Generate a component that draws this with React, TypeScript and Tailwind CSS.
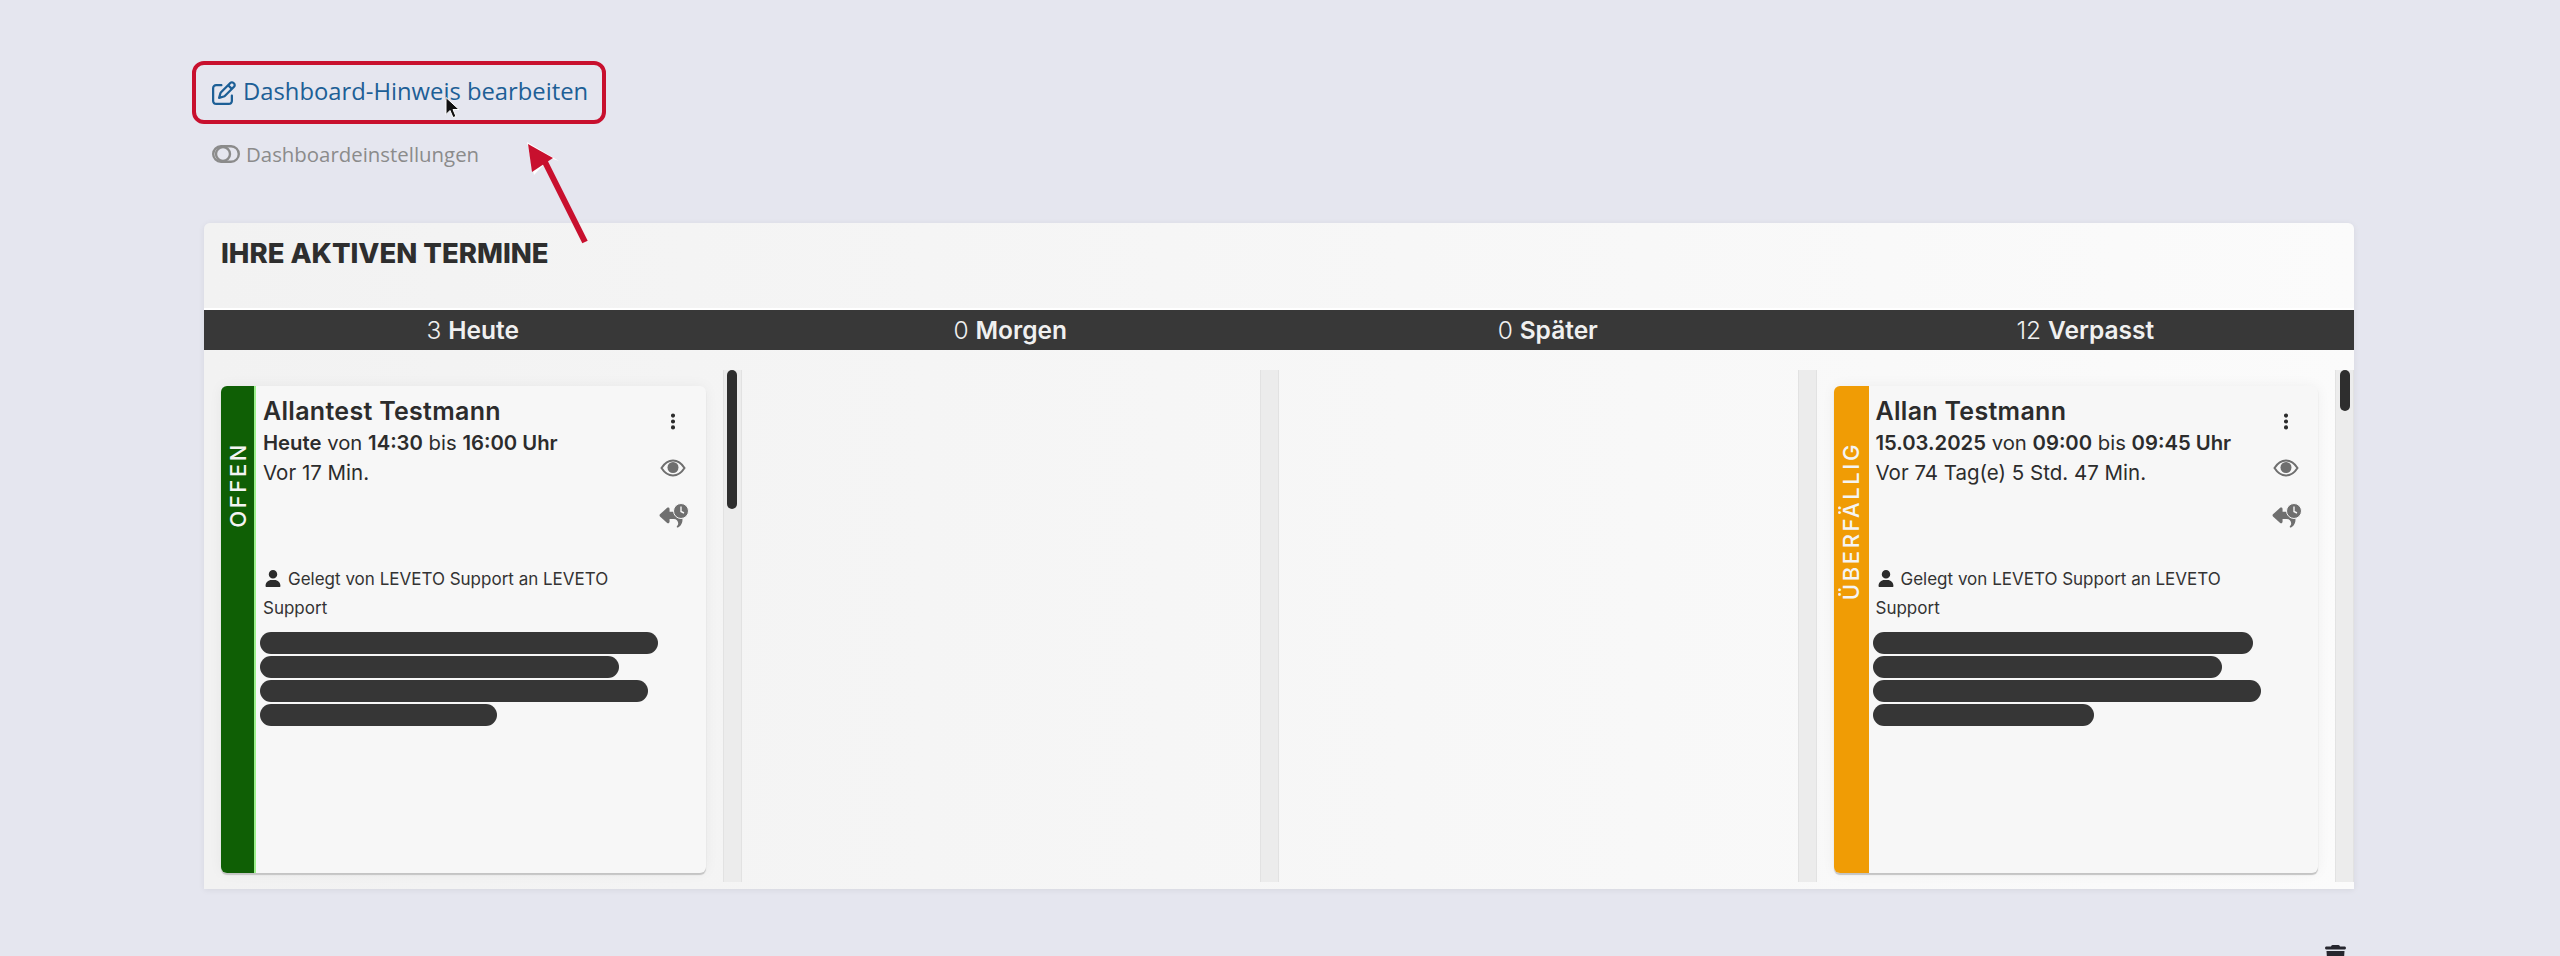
import React from 'react';
import { FaRegPenToSquare, FaReply, FaUser, FaEllipsisVertical, FaTrash } from 'react-icons/fa6';

interface CardProps {
    name: string;
    first: string;
    from: string;
    to: string;
    ago: string;
    label: string;
    strip: string;
    bars: number[];
}

const EyeIcon = () => (
    <svg viewBox="0 0 26 18" className="w-[26px] h-[18px] text-[#6f6f6f]">
        <path d="M1.5 9C5 3.5 9 1.5 13 1.5S21 3.5 24.5 9C21 14.5 17 16.5 13 16.5S5 14.5 1.5 9Z" fill="none" stroke="currentColor" strokeWidth="2" />
        <circle cx="13" cy="8.5" r="5.5" fill="currentColor" />
    </svg>
);

const ReplyClock = () => (
    <div className="relative w-[32px] h-[26px] text-[#6f6f6f]">
        <FaReply className="absolute left-0 top-[3px] w-[28px] h-[23px]" />
        <svg viewBox="0 0 16 16" className="absolute right-0 top-0 w-[16px] h-[16px]">
            <circle cx="8" cy="8" r="7.5" fill="#6f6f6f" stroke="#f7f7f7" strokeWidth="1" />
            <path d="M8 3.5V8.5L11 10" fill="none" stroke="#f7f7f7" strokeWidth="1.4" />
        </svg>
    </div>
);

const Card = ({ name, first, from, to, ago, label, strip, bars }: CardProps) => (
    <div className="flex h-[487px] rounded-[6px] overflow-hidden bg-[#f7f7f7] shadow-[0_2px_1px_#c4c4c4,0_0_14px_rgba(0,0,0,0.05)]">
        <div className={`w-[35px] shrink-0 flex justify-center pt-[56px] ${strip}`}>
            <span className="[writing-mode:vertical-rl] rotate-180 text-[22px] leading-none tracking-[2.6px] text-[#f4f4f4] font-medium h-fit">
                {label}
            </span>
        </div>
        <div className="flex-1 min-w-0 pl-[4px]">
            <div className="flex h-[172px]">
                <div className="flex-1 pl-[3px] pt-[9px] text-[#2c2c2c] whitespace-nowrap">
                    <div className="text-[25px] leading-[32px] font-semibold tracking-[0.3px]">{name}</div>
                    <div className="text-[20.3px] leading-[30px] mt-[1px]">
                        <b className="font-semibold">{first}</b> von <b className="font-semibold">{from}</b> bis{' '}
                        <b className="font-semibold">{to}</b>
                    </div>
                    <div className="text-[20.5px] leading-[30px]">{ago}</div>
                </div>
                <div className="w-[64px] shrink-0 flex flex-col items-center pt-[26px] pr-[1px]">
                    <FaEllipsisVertical className="w-[18px] h-[19px] text-[#2c2c2c]" />
                    <div className="mt-[28px]">
                        <EyeIcon />
                    </div>
                    <div className="mt-[26px]">
                        <ReplyClock />
                    </div>
                </div>
            </div>
            <div className="pl-[3px] pt-[7px] pr-[70px] text-[17px] leading-[29px] text-[#333]">
                <FaUser className="inline-block w-[16px] h-[17px] mx-[2px] mr-[7px] align-[-2px] text-[#2c2c2c]" />
                Gelegt von LEVETO Support an LEVETO Support
            </div>
            <div className="flex flex-col gap-[2px] mt-[9px]">
                {bars.map((w, i) => (
                    <div key={i} className="h-[22px] rounded-[11px] bg-[#363636]" style={{ width: w }} />
                ))}
            </div>
        </div>
    </div>
);

const Column = ({ thumb, children }: { thumb?: number; children?: React.ReactNode }) => (
    <div className="flex h-[512px]">
        <div className="flex-1 min-w-0 pl-[17px] pr-[17px] pt-[16px]">{children}</div>
        <div className="w-[19px] shrink-0 bg-[#ececec] border-x border-[#e2e2e2] flex justify-center">
            {thumb && <div className="w-[10px] rounded-[5px] bg-[#2e2e2e]" style={{ height: thumb }} />}
        </div>
    </div>
);

const heads = [
    ['3', 'Heute'],
    ['0', 'Morgen'],
    ['0', 'Später'],
    ['12', 'Verpasst'],
];

export default function App() {
    return (
        <div className="relative w-[2560px] h-[956px] overflow-hidden bg-[#e5e6ef] font-['Inter',sans-serif] pt-[61px] pl-[192px]">
            <div className="w-[414px] h-[63px] rounded-[12px] border-[4px] border-[#c8102e] flex items-center pl-[16px] text-[#1d5f96] font-['Open_Sans',sans-serif]">
                <FaRegPenToSquare className="w-[24px] h-[24px] mr-[7px] shrink-0" />
                <span className="text-[23.8px] leading-none whitespace-nowrap -translate-y-px">Dashboard-Hinweis bearbeiten</span>
            </div>
            <div className="flex items-center h-[24px] mt-[18px] pl-[20px] text-[#8b8b8b] font-['Open_Sans',sans-serif]">
                <svg viewBox="0 0 28 18" className="w-[28px] h-[18px] mr-[6px]">
                    <rect x="1.2" y="1.2" width="25.6" height="15.6" rx="7.8" fill="none" stroke="currentColor" strokeWidth="2.4" />
                    <circle cx="11" cy="9" r="7" fill="none" stroke="currentColor" strokeWidth="2.4" />
                </svg>
                <span className="text-[20.4px] leading-none whitespace-nowrap">Dashboardeinstellungen</span>
            </div>

            <div className="w-[2150px] h-[666px] ml-[12px] mt-[57px] rounded-t-[6px] bg-gradient-to-r from-[#f2f2f2] to-[#fbfbfb] shadow-[0_1px_6px_rgba(0,0,0,0.07)]">
                <div className="h-[87px] pl-[17px] pt-[13px] border-b-2 border-white">
                    <h1 className="text-[27.5px] leading-[34px] font-extrabold text-[#2e2e2e] whitespace-nowrap">IHRE AKTIVEN TERMINE</h1>
                </div>
                <div className="grid grid-cols-4 h-[40px] bg-[#383838] text-[24.5px] leading-[40px] text-center text-[#f0f0f0]">
                    {heads.map(([n, t]) => (
                        <div key={t}>
                            <span className="font-light">{n}</span> <b className="font-semibold">{t}</b>
                        </div>
                    ))}
                </div>
                <div className="grid grid-cols-4 pt-[20px]">
                    <Column thumb={139}>
                        <Card
                            name="Allantest Testmann"
                            first="Heute"
                            from="14:30"
                            to="16:00 Uhr"
                            ago="Vor 17 Min."
                            label="OFFEN"
                            strip="bg-[#0f5f05] border-r-2 border-[#9cf08c]"
                            bars={[398, 359, 388, 237]}
                        />
                    </Column>
                    <Column />
                    <Column />
                    <Column thumb={41}>
                        <Card
                            name="Allan Testmann"
                            first="15.03.2025"
                            from="09:00"
                            to="09:45 Uhr"
                            ago="Vor 74 Tag(e) 5 Std. 47 Min."
                            label="ÜBERFÄLLIG"
                            strip="bg-[#f09c05]"
                            bars={[380, 349, 388, 221]}
                        />
                    </Column>
                </div>
            </div>

            <div className="mt-[56px] pl-[2133px]">
                <FaTrash className="w-[21px] h-[24px] text-[#26262e]" />
            </div>

            {/* annotation arrow and mouse pointer */}
            <svg viewBox="0 0 100 130" className="absolute left-[510px] top-[130px] w-[100px] h-[130px]">
                <path d="M17 12L49 31L40 28L24 45Z" fill="#fff" />
                <path d="M75 112L34 30" stroke="#c8102e" strokeWidth="6" />
                <path d="M18 14L43 28L22 42Z" fill="#c8102e" />
            </svg>
            <svg viewBox="0 0 16 24" className="absolute left-[445px] top-[96px] w-[16px] h-[25px]">
                <path d="M1 1V18L5 14L8 21L11 20L8 13H14Z" fill="#111" stroke="#fff" strokeWidth="1" />
            </svg>
        </div>
    );
}
